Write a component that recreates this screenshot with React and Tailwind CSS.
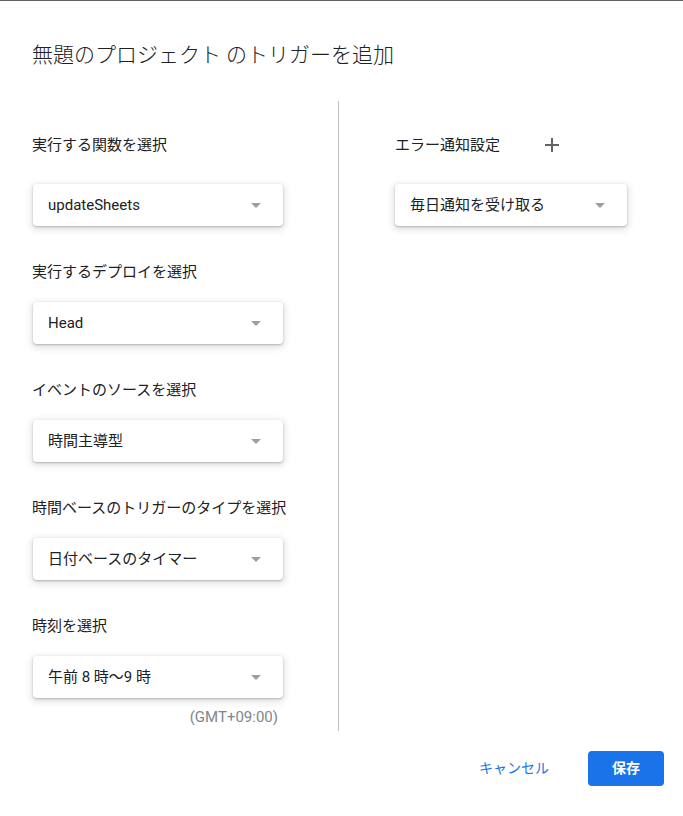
import React from "react";

const font = { fontFamily: 'Roboto, "Noto Sans CJK JP", sans-serif' };

function Caret() {
  return (
    <svg width="10" height="5" viewBox="0 0 10 5" className="shrink-0">
      <path d="M0 0 L10 0 L5 5 Z" fill="#9e9e9e" />
    </svg>
  );
}

function Select({ value, width }) {
  return (
    <div
      className={`${width} h-[42px] flex items-center justify-between pl-[15px] pr-[22px] bg-white rounded-[4px] shadow-[0_1px_2px_0_rgba(60,64,67,0.3),0_2px_6px_2px_rgba(60,64,67,0.15)]`}
    >
      <span className="text-[15px] text-[#202124] leading-5">{value}</span>
      <Caret />
    </div>
  );
}

function Field({ label, value, first }) {
  return (
    <div className={first ? "" : "mt-[36px]"}>
      {first ? (
        <div className="h-[40px] flex items-center text-[15px] text-[#202124]">{label}</div>
      ) : (
        <div className="h-[20px] leading-5 text-[15px] text-[#202124]">{label}</div>
      )}
      <div className={first ? "mt-[19px] ml-[1px]" : "mt-[20px] ml-[1px]"}>
        <Select value={value} width="w-[250px]" />
      </div>
    </div>
  );
}

export default function App() {
  const fields = [
    ["実行する関数を選択", "updateSheets"],
    ["実行するデプロイを選択", "Head"],
    ["イベントのソースを選択", "時間主導型"],
    ["時間ベースのトリガーのタイプを選択", "日付ベースのタイマー"],
    ["時刻を選択", "午前 8 時～9 時"],
  ];

  return (
    <div className="w-[683px] h-[816px] bg-white border-t border-[#5f6368]" style={font}>
      <h1 className="pl-[32px] pt-[40px] text-[21px] leading-7 text-[#202124] font-light">
        無題のプロジェクト のトリガーを追加
      </h1>

      <div className="mt-[32px] flex">
        <div className="w-[339px] pl-[32px] pt-[24px] pb-[5px] border-r border-[#bdc1c6]">
          {fields.map(([label, value], i) => (
            <Field key={label} label={label} value={value} first={i === 0} />
          ))}
          <div className="w-[251px] mt-[10px] pr-[5px] text-right text-[15px] leading-[18px] text-[#80868b]">
            (GMT+09:00)
          </div>
        </div>

        <div className="pl-[56px] pt-[24px]">
          <div className="h-[40px] flex items-center">
            <span className="text-[15px] text-[#202124]">エラー通知設定</span>
            <button className="ml-[40px] w-[24px] h-[24px] flex items-center justify-center">
              <svg width="14" height="14" viewBox="0 0 14 14">
                <path d="M7 0 V14 M0 7 H14" stroke="#5f6368" strokeWidth="2" />
              </svg>
            </button>
          </div>
          <div className="mt-[19px]">
            <Select value="毎日通知を受け取る" width="w-[232px]" />
          </div>
        </div>
      </div>

      <div className="mt-[20px] pr-[19px] flex justify-end items-center">
        <button className="h-[35px] px-[14px] text-[14px] text-[#1a73e8]">キャンセル</button>
        <button className="ml-[25px] w-[76px] h-[35px] rounded-[4px] bg-[#1a73e8] text-white text-[14px] font-bold">
          保存
        </button>
      </div>
    </div>
  );
}
